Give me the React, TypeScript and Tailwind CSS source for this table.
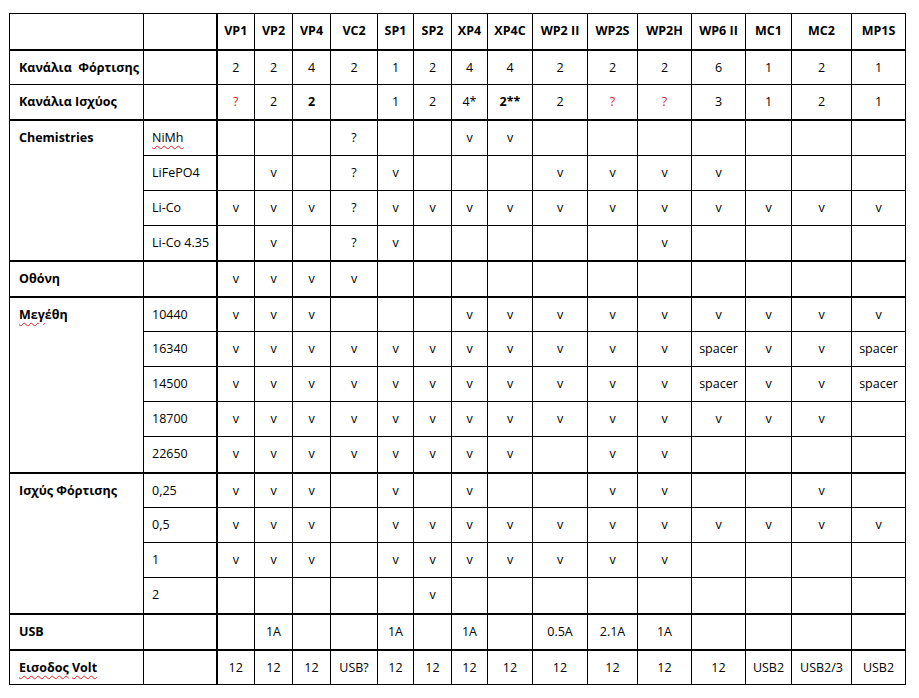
import { ReactNode } from "react";

const models = [
  "VP1",
  "VP2",
  "VP4",
  "VC2",
  "SP1",
  "SP2",
  "XP4",
  "XP4C",
  "WP2 II",
  "WP2S",
  "WP2H",
  "WP6 II",
  "MC1",
  "MC2",
  "MP1S",
];

const colWidths = [
  "w-[134px]",
  "w-[73px]",
  "w-[38px]",
  "w-[38px]",
  "w-[38px]",
  "w-[47px]",
  "w-[36px]",
  "w-[38px]",
  "w-[36px]",
  "w-[45px]",
  "w-[55px]",
  "w-[50px]",
  "w-[54px]",
  "w-[54px]",
  "w-[46px]",
  "w-[60px]",
  "w-[54px]",
];

type Row = {
  label?: ReactNode;
  span?: number;
  sub?: ReactNode;
  cells: string[];
  thick?: boolean;
  tall?: boolean;
};

const Squiggle = ({ children }: { children: ReactNode }) => (
  <span className="underline decoration-wavy decoration-[#e02020] decoration-1 underline-offset-[3px]">
    {children}
  </span>
);

// "!" = red, "^" = bold, "" = empty
const rows: Row[] = [
  {
    label: "Κανάλια\u00a0 Φόρτισης",
    cells: ["2", "2", "4", "2", "1", "2", "4", "4", "2", "2", "2", "6", "1", "2", "1"],
  },
  {
    label: "Κανάλια Ισχύος",
    cells: ["!?", "2", "^2", "", "1", "2", "4*", "^2**", "2", "!?", "!?", "3", "1", "2", "1"],
    thick: true,
  },
  {
    label: "Chemistries",
    span: 4,
    sub: <Squiggle>NiMh</Squiggle>,
    cells: ["", "", "", "?", "", "", "v", "v", "", "", "", "", "", "", ""],
    tall: true,
  },
  {
    sub: "LiFePO4",
    cells: ["", "v", "", "?", "v", "", "", "", "v", "v", "v", "v", "", "", ""],
  },
  {
    sub: "Li-Co",
    cells: ["v", "v", "v", "?", "v", "v", "v", "v", "v", "v", "v", "v", "v", "v", "v"],
  },
  {
    sub: "Li-Co 4.35",
    cells: ["", "v", "", "?", "v", "", "", "", "", "", "v", "", "", "", ""],
    thick: true,
  },
  {
    label: "Οθόνη",
    cells: ["v", "v", "v", "v", "", "", "", "", "", "", "", "", "", "", ""],
    thick: true,
    tall: true,
  },
  {
    label: (
      <>
        <Squiggle>Μεγ</Squiggle>έθη
      </>
    ),
    span: 5,
    sub: "10440",
    cells: ["v", "v", "v", "", "", "", "v", "v", "v", "v", "v", "v", "v", "v", "v"],
  },
  {
    sub: "16340",
    cells: ["v", "v", "v", "v", "v", "v", "v", "v", "v", "v", "v", "spacer", "v", "v", "spacer"],
  },
  {
    sub: "14500",
    cells: ["v", "v", "v", "v", "v", "v", "v", "v", "v", "v", "v", "spacer", "v", "v", "spacer"],
  },
  {
    sub: "18700",
    cells: ["v", "v", "v", "v", "v", "v", "v", "v", "v", "v", "v", "v", "v", "v", ""],
  },
  {
    sub: "22650",
    cells: ["v", "v", "v", "v", "v", "v", "v", "v", "", "v", "v", "", "", "", ""],
    thick: true,
    tall: true,
  },
  {
    label: "Ισχύς Φόρτισης",
    span: 4,
    sub: "0,25",
    cells: ["v", "v", "v", "", "v", "", "v", "", "", "v", "v", "", "", "v", ""],
  },
  {
    sub: "0,5",
    cells: ["v", "v", "v", "", "v", "v", "v", "v", "v", "v", "v", "v", "v", "v", "v"],
  },
  {
    sub: "1",
    cells: ["v", "v", "v", "", "v", "v", "v", "v", "v", "v", "v", "", "", "", ""],
  },
  {
    sub: "2",
    cells: ["", "", "", "", "", "v", "", "", "", "", "", "", "", "", ""],
    thick: true,
    tall: true,
  },
  {
    label: "USB",
    cells: ["", "1A", "", "", "1A", "", "1A", "", "0.5A", "2.1A", "1A", "", "", "", ""],
    thick: true,
    tall: true,
  },
  {
    label: (
      <>
        <Squiggle>Εισοδος</Squiggle> <Squiggle>Volt</Squiggle>
      </>
    ),
    cells: ["12", "12", "12", "USB?", "12", "12", "12", "12", "12", "12", "12", "12", "USB2", "USB2/3", "USB2"],
  },
];

// the merged label cell takes the thick edge of the last row it covers
function groupEndsThick(i: number, span: number) {
  return rows[i + span - 1].thick;
}

function Value({ v }: { v: string }) {
  if (!v) return null;
  if (v.startsWith("!")) return <span className="text-[#e3262b]">{v.slice(1)}</span>;
  if (v.startsWith("^")) return <span className="font-bold">{v.slice(1)}</span>;
  return <>{v}</>;
}

export default function App() {
  return (
    <div className="min-h-screen bg-white pt-[13px] pl-[9px]">
      <table className="w-[896px] table-fixed border-collapse border border-black font-['Open_Sans',sans-serif] text-[12.5px] text-black">
        <colgroup>
          {colWidths.map((w, i) => (
            <col key={`col-${i}`} className={w} />
          ))}
        </colgroup>
        <thead>
          <tr className="h-[36px]">
            <th className="border border-b-2 border-black" />
            <th className="border border-r-2 border-b-2 border-black" />
            {models.map((m) => (
              <th
                key={`head-${m}`}
                className="border border-b-2 border-black text-center font-bold whitespace-nowrap"
              >
                {m}
              </th>
            ))}
          </tr>
        </thead>
        <tbody>
          {rows.map((row, i) => (
            <tr key={`row-${i}`} className={row.tall ? "h-[36px]" : "h-[35px]"}>
              {row.label !== undefined && (
                <td
                  rowSpan={row.span ?? 1}
                  className={`border border-black px-[9px] align-top font-bold leading-[33px] whitespace-nowrap ${
                    groupEndsThick(i, row.span ?? 1) ? "border-b-2" : ""
                  }`}
                >
                  {row.label}
                </td>
              )}
              <td
                className={`border border-r-2 border-black px-[8px] align-top leading-[33px] whitespace-nowrap ${
                  row.thick ? "border-b-2" : ""
                }`}
              >
                {row.sub}
              </td>
              {row.cells.map((c, j) => (
                <td
                  key={`cell-${i}-${j}`}
                  className={`border border-black text-center align-top leading-[33px] whitespace-nowrap ${
                    row.thick ? "border-b-2" : ""
                  }`}
                >
                  <Value v={c} />
                </td>
              ))}
            </tr>
          ))}
        </tbody>
      </table>
    </div>
  );
}
